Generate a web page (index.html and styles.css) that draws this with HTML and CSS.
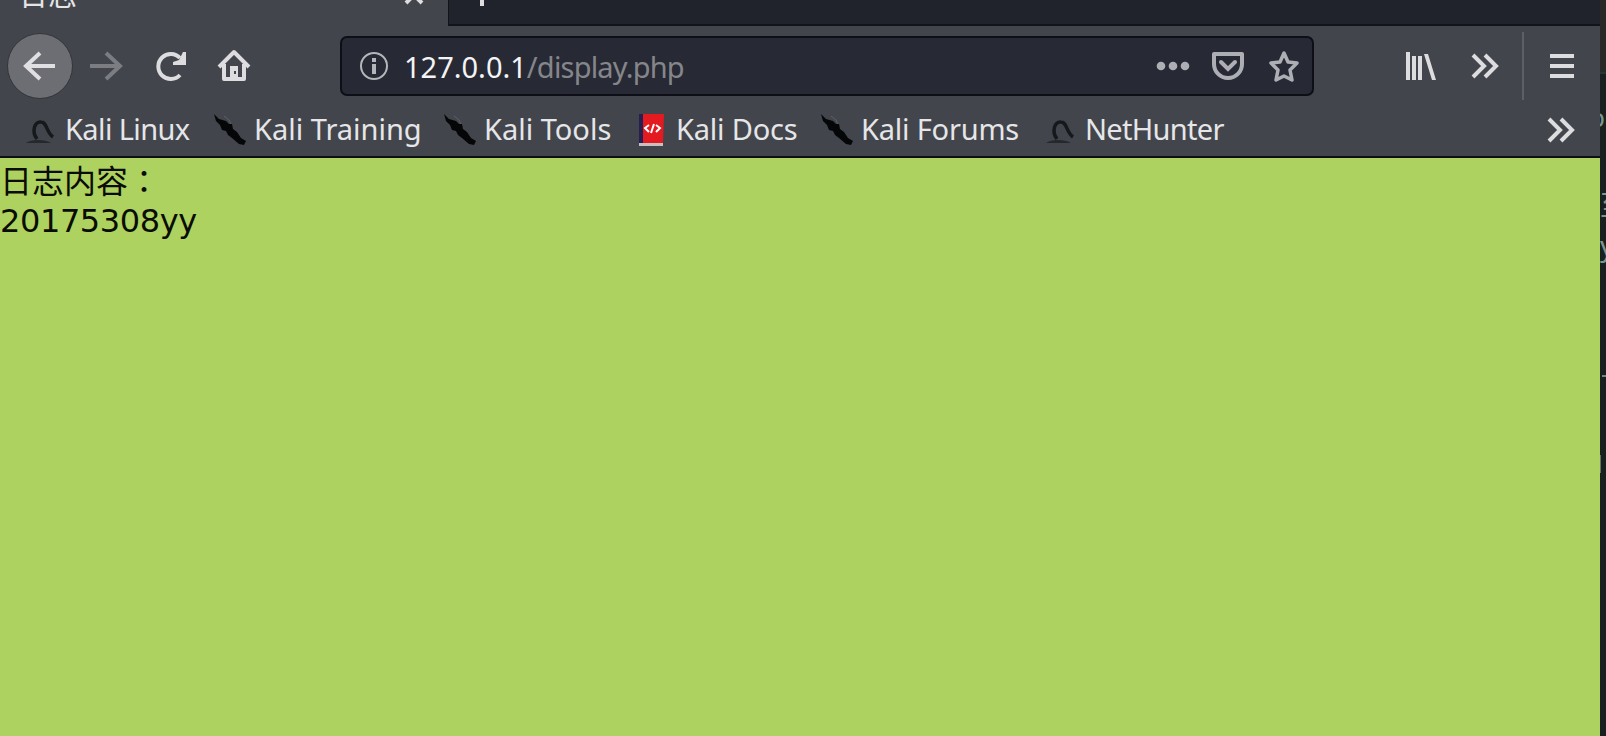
FILE: index.html
```
<!DOCTYPE html>
<html lang="zh-CN">
<head>
    <meta charset="UTF-8">
    <title>日志</title>
    <link rel="stylesheet" href="styles.css">
</head>
<body>
    <!-- shared icons -->
    <svg class="defs">
        <symbol id="dagger" viewBox="0 0 32 32">
            <path d="M0 0l5 5 7 2 3 3 3 0 1 5 4 3 4 6 5 3-2 4-5-1-7-6-4-3-2-4-4-1-2-5-4-4z" fill="#050607"/>
            <path d="M10 2l5 4 2 4" stroke="#5d6065" fill="none"/>
        </symbol>
        <symbol id="dragon" viewBox="0 0 32 32">
            <path d="M12 25c-6-8-2-18 4-17 6 0 5 10 12 15" fill="none" stroke="#16191c" stroke-width="3.5"/>
            <path d="M1 29c5-4 19-4 25 0z" fill="#25282c"/>
        </symbol>
        <symbol id="chevrons" viewBox="0 0 28 26">
            <path d="M2 2l11 11L2 24M14 2l11 11-11 11" fill="none" stroke="#dddde0" stroke-width="4"/>
        </symbol>
    </svg>

    <div class="screen">
        <div class="browser">
            <div class="tabs">
                <div class="tab active">
                    <span class="tab-title">日志</span>
                    <svg class="tab-close" width="20" height="20" viewBox="0 0 20 20"><path d="M2 2l16 16M18 2L2 18" stroke="#dddde0" stroke-width="4"/></svg>
                </div>
                <div class="new-tab">
                    <svg width="24" height="24" viewBox="0 0 24 24"><path d="M12 0v24M0 12h24" stroke="#dddde0" stroke-width="4"/></svg>
                </div>
            </div>

            <div class="navbar">
                <div class="back">
                    <svg width="34" height="30" viewBox="0 0 34 30"><path d="M32 15H3M17 2L3 15l14 13" fill="none" stroke="#e0e0e3" stroke-width="4"/></svg>
                </div>
                <svg class="forward" width="34" height="30" viewBox="0 0 34 30"><path d="M1 15h29M17 2l14 13-14 13" fill="none" stroke="#7c7d83" stroke-width="4"/></svg>
                <svg class="reload" width="32" height="32" viewBox="0 0 32 32">
                    <path d="M25 8A12.5 12.5 0 1 0 25 25" fill="none" stroke="#dddde0" stroke-width="4"/>
                    <path d="M31 2v13H18v-3l6-2 4-8z" fill="#dddde0"/>
                </svg>
                <svg class="home" width="34" height="34" viewBox="0 0 34 34">
                    <path d="M2 18L17 3l15 15M7 15v15h20V15" fill="none" stroke="#dddde0" stroke-width="4" stroke-linejoin="round"/>
                    <path d="M13 31V17h8v14z" fill="#dddde0"/>
                    <path d="M17 22h2v3h-2z" fill="#42454c"/>
                </svg>

                <div class="urlbar">
                    <svg width="30" height="30" viewBox="0 0 30 30">
                        <circle cx="15" cy="15" r="13" fill="none" stroke="#b5b6bb" stroke-width="2"/>
                        <path d="M13 7h4v4h-4zM13 13h4v10h-4z" fill="#b5b6bb"/>
                    </svg>
                    <span class="url"><span class="host">127.0.0.1</span>/display.php</span>
                    <svg width="34" height="10" viewBox="0 0 34 10"><g fill="#aeafb5"><circle cx="5" cy="5" r="4.3"/><circle cx="17" cy="5" r="4.3"/><circle cx="29" cy="5" r="4.3"/></g></svg>
                    <svg class="pocket" width="32" height="28" viewBox="0 0 32 28">
                        <path d="M2 2h28v10a14 14 0 0 1-28 0z" fill="none" stroke="#aeafb5" stroke-width="4" stroke-linejoin="round"/>
                        <path d="M9 10l7 7 7-7" fill="none" stroke="#aeafb5" stroke-width="4" stroke-linecap="round"/>
                    </svg>
                    <svg class="star" width="32" height="32" viewBox="0 0 32 32"><path d="M16 3l4 9 9 1-7 7 2 10-8-4-8 4 2-10-7-7 9-1z" fill="none" stroke="#aeafb5" stroke-width="3.5" stroke-linejoin="round"/></svg>
                </div>

                <svg class="library" width="32" height="28" viewBox="0 0 32 28">
                    <path d="M0 0h4v28H0zM6 4h4v24H6zM12 4h4v24h-4zM18 2h4l8 26h-4z" fill="#dddde0"/>
                </svg>
                <svg class="more" width="28" height="26"><use href="#chevrons"/></svg>
                <div class="separator"></div>
                <svg class="menu" width="24" height="24" viewBox="0 0 24 24"><path d="M0 2h24M0 12h24M0 22h24" stroke="#dddde0" stroke-width="4"/></svg>
            </div>

            <div class="bookmarks">
                <div class="bookmark linux"><svg><use href="#dragon"/></svg>Kali Linux</div>
                <div class="bookmark training"><svg><use href="#dagger"/></svg>Kali Training</div>
                <div class="bookmark tools"><svg><use href="#dagger"/></svg>Kali Tools</div>
                <div class="bookmark docs">
                    <svg viewBox="0 0 32 32">
                        <path d="M3 0h25l-1 29H3z" fill="#e31b20"/>
                        <path d="M3 0h4v29H3z" fill="#25204f"/>
                        <path d="M3 29h24v3H3z" fill="#c9bfc0"/>
                        <path d="M13 11l-4 3 4 4M20 11l4 3-4 4M18 10l-3 9" fill="none" stroke="#fff" stroke-width="2"/>
                    </svg>Kali Docs
                </div>
                <div class="bookmark forums"><svg><use href="#dagger"/></svg>Kali Forums</div>
                <div class="bookmark nethunter"><svg><use href="#dragon"/></svg>NetHunter</div>
                <svg class="overflow" width="28" height="26"><use href="#chevrons"/></svg>
            </div>

            <div class="page">
                日志内容<span class="colon" lang="zh-TW">：</span><br>
                <span class="log">20175308yy</span>
            </div>
        </div>

        <!-- sliver of the window behind -->
        <div class="behind">
            <div class="behind-title"></div>
            <div class="behind-path">p</div>
            <div class="behind-text">至</div>
            <div class="behind-text">y</div>
            <div class="behind-mark"></div>
            <div class="behind-scroll"></div>
        </div>
    </div>
</body>
</html>
```
FILE: styles.css
```
body {
    margin: 0;
    overflow: hidden;
    font-family: "Noto Sans", "Noto Sans CJK SC", sans-serif;
}
svg {
    display: block;
    flex: none;
}
.defs {
    display: none;
}
.screen {
    display: flex;
    height: 736px;
    background-color: #1a201f;
}
.browser {
    display: flex;
    flex-direction: column;
    width: 1600px;
    flex: none;
}

/* tabs */
.tabs {
    display: flex;
    height: 26px;
    overflow: hidden;
    background-color: #20232c;
    color: #e4e4e6;
}
.tab {
    display: flex;
    justify-content: space-between;
    width: 448px;
    box-sizing: border-box;
    padding: 0 24px 0 19px;
    background-color: #42454c;
}
.tab-title {
    font-size: 29px;
    line-height: 40px;
    margin-top: -25px;
}
.tab-close {
    margin-top: -15px;
}
.new-tab {
    flex: 1;
    height: 26px;
    box-sizing: border-box;
    padding-left: 21px;
    border-bottom: 2px solid #12141b;
    border-left: 1px solid #12141b;
}
.new-tab svg {
    margin-top: -18px;
}

/* toolbar */
.navbar {
    display: flex;
    align-items: center;
    height: 80px;
    background-color: #42454c;
}
.back {
    display: flex;
    align-items: center;
    justify-content: center;
    width: 66px;
    height: 66px;
    box-sizing: border-box;
    margin-left: 7px;
    border: 1px solid #33353b;
    border-radius: 50%;
    background-color: #6d6d74;
}
.forward {
    margin-left: 16px;
}
.reload {
    margin-left: 32px;
}
.home {
    margin-left: 30px;
}
.urlbar {
    display: flex;
    align-items: center;
    width: 974px;
    height: 60px;
    box-sizing: border-box;
    margin-left: 89px;
    padding: 0 12px 0 17px;
    border: 2px solid #0d0e16;
    border-radius: 7px;
    background-color: #272a34;
}
.url {
    flex: 1;
    margin-left: 15px;
    padding-top: 1px;
    font-size: 29px;
    letter-spacing: -0.8px;
    color: #85868b;
}
.host {
    letter-spacing: 0;
    color: #f4f4f6;
}
.pocket {
    margin-left: 22px;
}
.star {
    margin-left: 24px;
}
.library {
    margin-left: 92px;
}
.more {
    margin-left: 33px;
}
.separator {
    width: 2px;
    height: 68px;
    margin-left: 23px;
    background-color: #5d5f66;
}
.menu {
    margin-left: 26px;
}

/* bookmarks */
.bookmarks {
    display: flex;
    align-items: center;
    height: 52px;
    box-sizing: border-box;
    padding: 0 25px 4px;
    border-bottom: 2px solid #0d0f15;
    background-color: #42454c;
}
.bookmark {
    display: flex;
    align-items: center;
    gap: 8px;
    flex: none;
    font-size: 29px;
    line-height: 40px;
    white-space: nowrap;
    color: #e6e6e8;
}
.bookmark svg {
    width: 32px;
    height: 32px;
    margin-top: 2px;
}
.linux {
    width: 189px;
    letter-spacing: -0.6px;
}
.training {
    width: 230px;
}
.tools {
    width: 192px;
}
.docs {
    width: 185px;
    letter-spacing: -0.2px;
}
.forums {
    width: 224px;
    letter-spacing: -0.2px;
}
.nethunter {
    letter-spacing: -0.7px;
}
.overflow {
    margin-top: 2px;
    margin-left: auto;
}

/* page content */
.page {
    flex: 1;
    background-color: #aed25f;
    color: #0a0c05;
    font-family: "DejaVu Sans", "Noto Sans CJK SC", sans-serif;
    font-size: 32px;
    line-height: 39px;
    padding-top: 2px;
}
.colon {
    font-family: "Noto Sans CJK TC", sans-serif;
}
.log {
    letter-spacing: -0.4px;
}

/* window behind */
.behind {
    width: 6px;
    overflow: hidden;
    color: #7b9690;
}
.behind-title {
    height: 72px;
    background-color: #292a27;
    border-bottom: 2px solid #263638;
}
.behind-path {
    height: 111px;
    margin-left: -11px;
    font-size: 26px;
    line-height: 86px;
}
.behind-text {
    height: 40px;
    font-size: 28px;
    line-height: 40px;
}
.behind-mark {
    width: 4px;
    height: 2px;
    margin: 110px 0 78px 2px;
    background-color: #6f8882;
}
.behind-scroll {
    width: 1px;
    height: 18px;
    background-color: #66716b;
}
```
